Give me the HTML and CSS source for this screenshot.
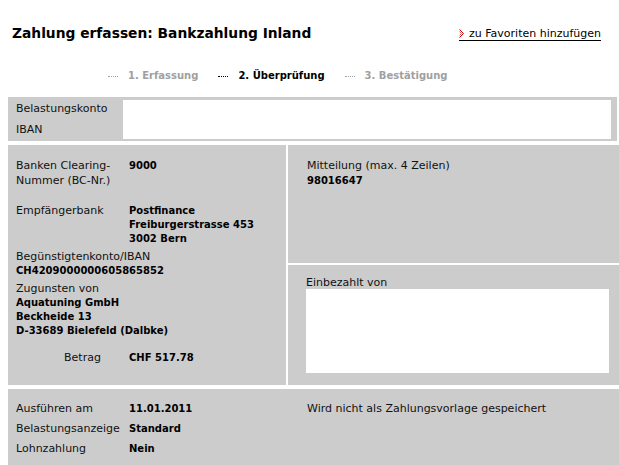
FILE: index.html
```html
<!DOCTYPE html>
<html lang="de">
<head>
    <meta charset="UTF-8">
    <title>Zahlung erfassen: Bankzahlung Inland</title>
    <link rel="stylesheet" href="styles.css">
</head>
<body>
    <div class="page">
        <div class="header">
            <h1>Zahlung erfassen: Bankzahlung Inland</h1>
            <a class="fav" href="#">
                <svg class="fav-icon" width="6" height="9" viewBox="0 0 6 9">
                    <polyline points="0.5,0.5 4.5,4.5 0.5,8.5" fill="none" stroke="#d40000" stroke-width="1"/>
                    <polyline points="0.5,2.5 2.5,4.5 0.5,6.5" fill="none" stroke="#e86060" stroke-width="1"/>
                </svg>
                zu Favoriten hinzufügen
            </a>
        </div>

        <div class="steps">
            <span class="step"><i class="dots"></i>1. Erfassung</span>
            <span class="step current"><i class="dots"></i>2. Überprüfung</span>
            <span class="step"><i class="dots"></i>3. Bestätigung</span>
        </div>

        <div class="account">
            <div class="account-labels">
                <div>Belastungskonto</div>
                <div>IBAN</div>
            </div>
            <div class="account-field"></div>
        </div>

        <div class="details">
            <div class="cell cell-left">
                <div class="field field-bc">
                    <div class="label">Banken Clearing-<br>Nummer (BC-Nr.)</div>
                    <div class="value">9000</div>
                </div>
                <div class="field field-bank">
                    <div class="label">Empfängerbank</div>
                    <div class="value">Postfinance<br>Freiburgerstrasse 453<br>3002 Bern</div>
                </div>
                <div class="block">
                    <div>Begünstigtenkonto/IBAN</div>
                    <div class="value">CH4209000000605865852</div>
                </div>
                <div class="block">
                    <div>Zugunsten von</div>
                    <div class="value">Aquatuning GmbH<br>Beckheide 13<br>D-33689 Bielefeld (Dalbke)</div>
                </div>
                <div class="field field-amount">
                    <div class="label">Betrag</div>
                    <div class="value">CHF 517.78</div>
                </div>
            </div>
            <div class="cell cell-message">
                <div>Mitteilung (max. 4 Zeilen)</div>
                <div class="value">98016647</div>
            </div>
            <div class="cell cell-payer">
                <div class="payer-label">Einbezahlt von</div>
                <div class="payer-box"></div>
            </div>
        </div>

        <div class="exec">
            <div class="exec-rows">
                <div class="label">Ausführen am</div><div class="value">11.01.2011</div>
                <div class="label">Belastungsanzeige</div><div class="value">Standard</div>
                <div class="label">Lohnzahlung</div><div class="value">Nein</div>
            </div>
            <div class="exec-note">Wird nicht als Zahlungsvorlage gespeichert</div>
        </div>
    </div>
</body>
</html>
```

FILE: styles.css
```css
body {
    margin: 0;
    font-family: "DejaVu Sans", Verdana, sans-serif;
    font-size: 11px;
    color: #111;
    background-color: #fff;
}

.page {
    margin-left: 8px;
    width: 611px;
}

/* header */
.header {
    display: flex;
    justify-content: space-between;
    align-items: center;
    padding: 24px 18px 0 4px;
    height: 18px;
}

h1 {
    margin: 0;
    font-size: 13.8px;
    line-height: 18px;
    color: #000;
}

.fav {
    display: flex;
    align-items: center;
    gap: 4px;
    color: #000;
    text-decoration: none;
    border-bottom: 1px solid #000;
    line-height: 13px;
    margin-top: 2px;
}

.fav-icon {
    display: block;
}

/* steps */
.steps {
    display: flex;
    gap: 20px;
    margin-top: 27px;
    padding-left: 100px;
    line-height: 14px;
    font-size: 10px;
    font-weight: bold;
    color: #a0a0a0;
}

.step {
    display: flex;
    align-items: center;
}

.step.current {
    color: #000;
}

.dots {
    display: inline-block;
    width: 10px;
    height: 0;
    border-top: 1px dotted #a0a0a0;
    margin-right: 10px;
}

.step.current .dots {
    border-top-color: #000;
}

/* account */
.account {
    display: flex;
    width: 609px;
    height: 44px;
    margin-top: 14px;
    background-color: #ccc;
}

.account-labels {
    width: 107px;
    padding: 1px 0 0 8px;
    line-height: 21px;
}

.account-field {
    width: 488px;
    height: 39px;
    margin-top: 3px;
    background-color: #fff;
}

/* details */
.details {
    display: grid;
    grid-template-columns: 278px 1fr;
    grid-template-rows: 118px 120px;
    gap: 2px;
    margin-top: 4px;
    background-color: #fff;
}

.cell {
    background-color: #ccc;
    line-height: 14px;
}

.value {
    font-size: 10px;
    font-weight: bold;
    color: #000;
}

.cell-left {
    grid-row: 1 / 3;
    padding: 13px 0 0 8px;
}

.field {
    display: grid;
    grid-template-columns: 113px 1fr;
}

.field-bc {
    line-height: 15px;
}

.field-bank {
    margin-top: 16px;
}

.block {
    margin-top: 4px;
}

.field-amount {
    margin-top: 13px;
}

.field-amount .label {
    padding-left: 48px;
}

.cell-message {
    padding: 13px 0 0 19px;
    line-height: 15px;
}

.cell-payer {
    padding: 11px 10px 0 18px;
}

.payer-label {
    line-height: 13px;
}

.payer-box {
    height: 84px;
    background-color: #fff;
}

/* execution */
.exec {
    display: grid;
    grid-template-columns: 299px 1fr;
    height: 80px;
    margin-top: 4px;
    background-color: #ccc;
    line-height: 20px;
}

.exec-rows {
    display: grid;
    grid-template-columns: 113px 1fr;
    align-content: start;
    padding: 10px 0 0 8px;
}

.exec-note {
    padding-top: 10px;
}
```
